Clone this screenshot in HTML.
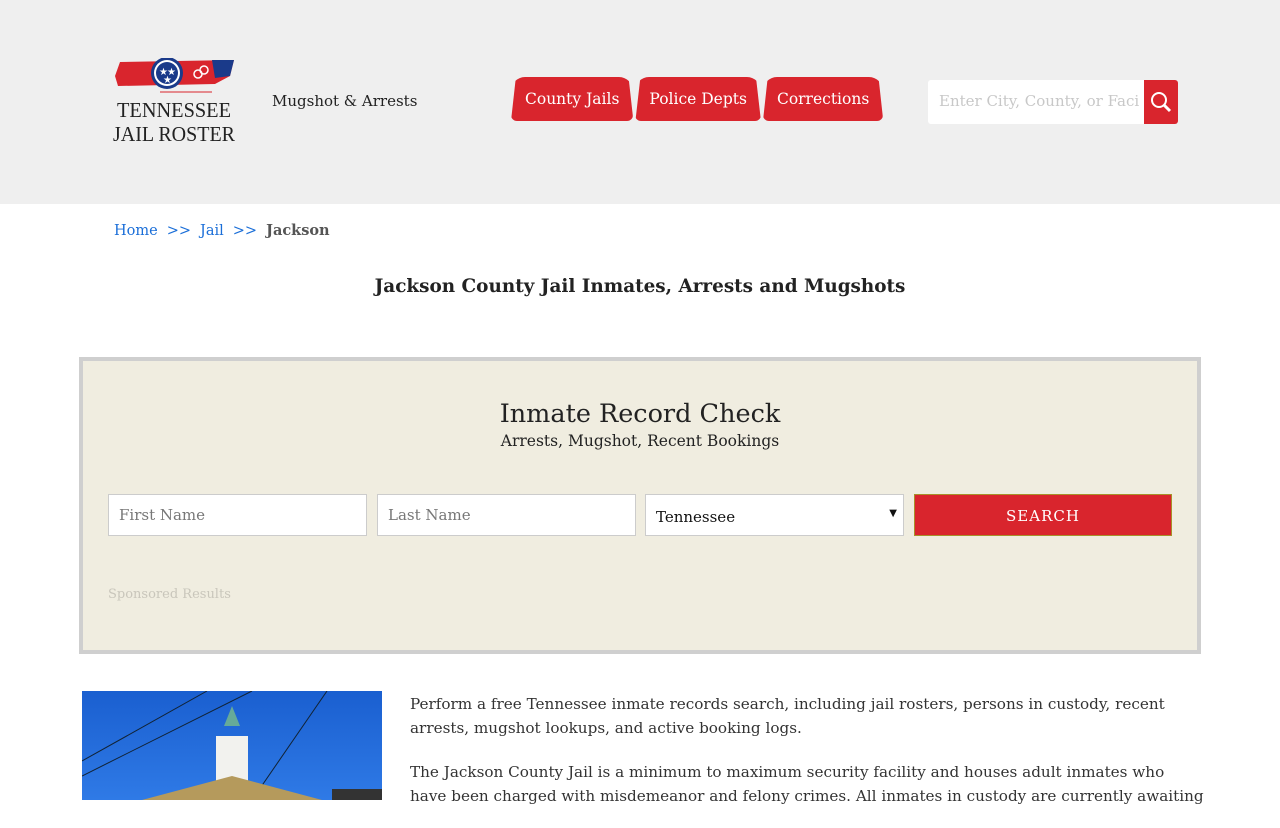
<!DOCTYPE html>
<html><head><meta charset="utf-8">
<style>
*{box-sizing:border-box;margin:0;padding:0}
body{width:1280px;height:800px;overflow:hidden;background:#fff;font-family:"DejaVu Serif","Liberation Serif",serif;color:#222}
.hdr{height:204px;background:#efefef;position:relative}
.logo{position:absolute;left:110px;top:58px}
.tag{position:absolute;left:272px;top:92px;font-size:15px;color:#222}
.nav{position:absolute;left:511px;top:77px;display:flex}
.nav div{background:#d9252d;color:#fff;font-size:15.5px;height:44px;line-height:44px;padding:0 14px;border-radius:14px 14px 6px 6px;margin-right:2px;clip-path:polygon(4% 0,96% 0,100% 100%,0 100%);}
.srch{position:absolute;left:928px;top:80px;width:250px;height:44px;background:#fff;border-radius:3px}
.srch span{position:absolute;left:11px;top:12px;font-size:15px;color:#c8c8c8;white-space:nowrap;overflow:hidden;width:200px}
.srch b{position:absolute;right:0;top:0;width:34px;height:44px;background:#d9252d;border-radius:0 3px 3px 0}
.bc{position:absolute;left:114px;top:222px;font-size:14.5px;color:#1a6ed8}
.bc i{font-style:normal;margin:0 9px}
.bc strong{color:#555}
h1{position:absolute;left:0;width:1280px;top:276px;text-align:center;font-size:18.4px;font-weight:bold;color:#222}
.box{position:absolute;left:79px;top:357px;width:1122px;height:297px;background:#f0ede0;border:4px solid #cfcfcf}
.box h2{text-align:center;font-weight:normal;font-size:25.5px;margin-top:38px;color:#222}
.box p.s{text-align:center;font-size:15.5px;margin-top:3px}
.f{position:absolute;top:133px;height:42px;width:259px;background:#fff;border:1px solid #ccc;font-size:15px;color:#777;padding:11px 10px}
.sel{color:#111;padding-top:13px}
.btn{position:absolute;top:133px;left:831px;width:258px;height:42px;background:#d9252d;border:1px solid #a8902a;color:#fff;text-align:center;line-height:42px;font-size:15px;letter-spacing:1px}
.sp{position:absolute;left:25px;top:226px;font-size:13px;color:#c9c6bb}
.img{position:absolute;left:82px;top:691px;width:300px;height:109px;background:linear-gradient(#1a5fd0,#2f7ae6);overflow:hidden}
.txt{position:absolute;left:410px;top:692px;width:860px;font-size:15.2px;line-height:24px;color:#333;white-space:nowrap}
.txt p{margin-bottom:20px}
</style></head><body>
<div class="hdr">
<svg class="logo" width="130" height="88" viewBox="0 0 130 88">
<path d="M10 4 L124 2 L120 18 L105 26 L8 28 L5 18 Z" fill="#d9252d"/>
<path d="M102 2 L124 2 L120 18 L105 20 Z" fill="#1a3a8a"/>
<circle cx="57" cy="15" r="16" fill="#1a3a8a"/><circle cx="57" cy="15" r="13" fill="#fff"/><circle cx="57" cy="15" r="11" fill="#1a3a8a"/>
<text x="49" y="17" fill="#fff" font-size="10">★</text><text x="57" y="17" fill="#fff" font-size="10">★</text><text x="53" y="25" fill="#fff" font-size="10">★</text>
<circle cx="88" cy="16" r="4" fill="none" stroke="#fff" stroke-width="1.5"/><circle cx="94" cy="12" r="4" fill="none" stroke="#fff" stroke-width="1.5"/>
<line x1="50" y1="34" x2="102" y2="34" stroke="#d9252d"/>
<text x="64" y="59" text-anchor="middle" font-family="Liberation Serif" font-size="21" fill="#222" textLength="114" lengthAdjust="spacingAndGlyphs">TENNESSEE</text>
<text x="64" y="83" text-anchor="middle" font-family="Liberation Serif" font-size="21" fill="#222" textLength="122" lengthAdjust="spacingAndGlyphs">JAIL ROSTER</text>
</svg>
<div class="tag">Mugshot &amp; Arrests</div>
<div class="nav"><div>County Jails</div><div>Police Depts</div><div>Corrections</div></div>
<div class="srch"><span>Enter City, County, or Facil</span><b><svg width="34" height="44"><circle cx="15" cy="20" r="7" fill="none" stroke="#fff" stroke-width="2"/><line x1="20" y1="25" x2="26" y2="31" stroke="#fff" stroke-width="3"/></svg></b></div>
</div>
<div class="bc">Home<i>&gt;&gt;</i>Jail<i>&gt;&gt;</i><strong>Jackson</strong></div>
<h1>Jackson County Jail Inmates, Arrests and Mugshots</h1>
<div class="box">
<h2>Inmate Record Check</h2>
<p class="s">Arrests, Mugshot, Recent Bookings</p>
<div class="f" style="left:25px">First Name</div>
<div class="f" style="left:294px">Last Name</div>
<div class="f sel" style="left:562px">Tennessee<span style="position:absolute;right:6px;font-size:10px">▼</span></div>
<div class="btn">SEARCH</div>
<div class="sp">Sponsored Results</div>
</div>
<div class="img"><svg width="300" height="109"><line x1="0" y1="70" x2="125" y2="0" stroke="#123" /><line x1="0" y1="85" x2="170" y2="0" stroke="#123"/><line x1="170" y1="109" x2="245" y2="0" stroke="#123"/><rect x="134" y="45" width="32" height="64" fill="#f2f2ee"/><path d="M150 15 L158 35 L142 35Z" fill="#6a9"/><path d="M60 109 L150 85 L240 109Z" fill="#b59a5c"/><rect x="250" y="98" width="50" height="11" fill="#333"/></svg></div>
<div class="txt"><p>Perform a free Tennessee inmate records search, including jail rosters, persons in custody, recent<br>arrests, mugshot lookups, and active booking logs.</p><p>The Jackson County Jail is a minimum to maximum security facility and houses adult inmates who<br>have been charged with misdemeanor and felony crimes. All inmates in custody are currently awaiting</p></div>
</body></html>
